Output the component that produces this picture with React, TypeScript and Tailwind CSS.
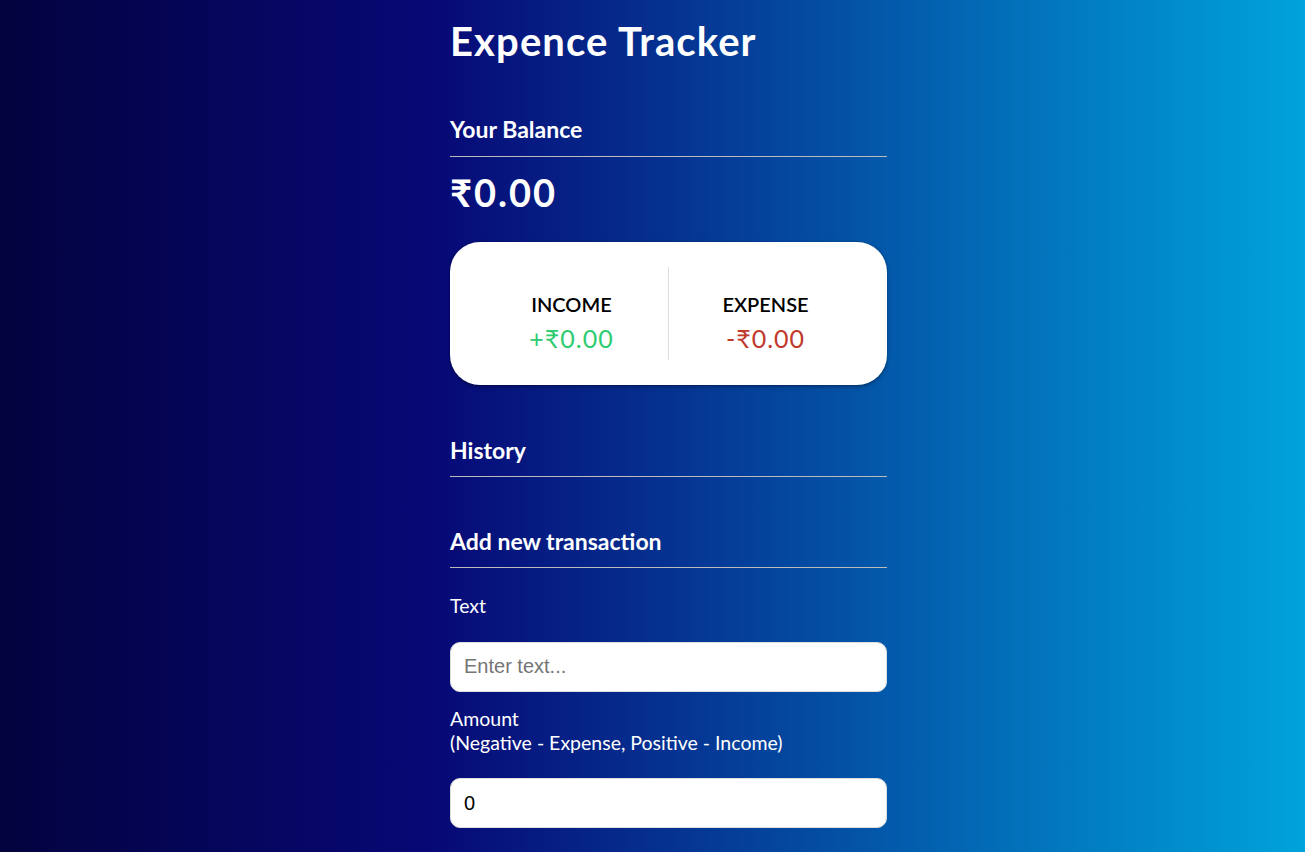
import React from "react";

const lato = "font-['Lato','Noto_Sans',sans-serif]";

function SectionTitle({ children, className = "" }: { children: React.ReactNode; className?: string }) {
  return (
    <h3 className={`border-b border-[#bbb] pb-[12px] text-[23px] font-bold leading-[28px] text-white ${className}`}>
      {children}
    </h3>
  );
}

function Field({ label, placeholder, value, className = "" }: { label: React.ReactNode; placeholder?: string; value?: string; className?: string }) {
  return (
    <div className={className}>
      <label className="block text-[19.5px] leading-[24px] text-white">{label}</label>
      <input
        className="mt-[23.5px] block h-[50px] w-full rounded-[10px] border border-[#dedede] bg-white px-[13px] font-['Liberation_Sans',Arial,sans-serif] text-[20px] text-black placeholder:text-[#757575] focus:outline-none"
        placeholder={placeholder}
        defaultValue={value}
        type="text"
      />
    </div>
  );
}

export default function App() {
  return (
    <div className={`min-h-screen bg-[linear-gradient(to_right,#03033f_0%,#070875_33%,#00a3dc_100%)] ${lato}`}>
      <div className="flex justify-center pl-[32px]">
        <div className="w-[437px] pb-[40px]">
          <h1 className="pt-[17px] text-[40px] font-bold leading-[48px] tracking-[1.1px] text-white">Expence Tracker</h1>

          <h4 className="mt-[50px] border-b border-[#bbb] pb-[13px] text-[23px] font-bold leading-[28px] text-white">
            Your Balance
          </h4>
          <div className="mt-[12px] text-[38px] font-bold leading-[46px] tracking-[2px] text-white">₹0.00</div>

          <div className="mt-[27px] flex rounded-[30px] bg-white px-[25px] py-[25px] shadow-[0_1.5px_4px_rgba(0,0,0,0.25),0_1px_2px_rgba(0,0,0,0.2)]">
            <div className="flex h-[93px] flex-1 flex-col items-center border-r border-[#dedede] pt-[25px]">
              <h4 className="text-[20px] font-semibold uppercase leading-[24px] text-black">Income</h4>
              <p className="mt-[7px] text-[25px] leading-[30px] tracking-[1px] text-[#2ecc71]">+₹0.00</p>
            </div>
            <div className="flex h-[93px] flex-1 flex-col items-center pt-[25px]">
              <h4 className="text-[20px] font-semibold uppercase leading-[24px] text-black">Expense</h4>
              <p className="mt-[7px] text-[25px] leading-[30px] tracking-[1px] text-[#c0392b]">-₹0.00</p>
            </div>
          </div>

          <SectionTitle className="mt-[51px]">History</SectionTitle>
          <SectionTitle className="mt-[50px]">Add new transaction</SectionTitle>

          <form>
            <Field className="mt-[26px]" label="Text" placeholder="Enter text..." />
            <Field
              className="mt-[15px]"
              label={
                <>
                  Amount <br />
                  (Negative - Expense, Positive - Income)
                </>
              }
              placeholder="Enter amount..."
              value="0"
            />
          </form>
        </div>
      </div>
    </div>
  );
}
